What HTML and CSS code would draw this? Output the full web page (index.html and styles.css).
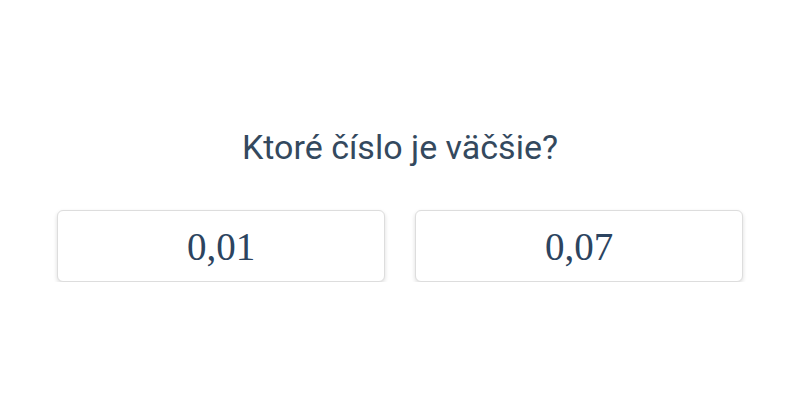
FILE: index.html
```html
<!DOCTYPE html>
<html lang="sk">
<head>
  <meta charset="UTF-8" />
  <meta name="viewport" content="width=device-width, initial-scale=1.0"/>
  <title>Porovnanie čísel</title>
  <link rel="stylesheet" href="styles.css">
</head>
<body>

<div class="quiz">
  <h2 class="question">Ktoré číslo je väčšie?</h2>

  <div class="options">
    <div class="option">0,01</div>
    <div class="option">0,07</div>
  </div>
</div>

</body>
</html>
```

FILE: styles.css
```css
body {
  font-family: Roboto, "Noto Sans", sans-serif;
  margin: 0;
  background-color: #ffffff;
  color: #34495e;
}

.quiz {
  padding: 126px 57px 0;
}

.question {
  margin: 0 0 42px;
  font-size: 34px;
  font-weight: 400;
  line-height: 42px;
  text-align: center;
  color: #34495e;
}

.options {
  display: grid;
  grid-template-columns: 1fr 1fr;
  gap: 30px;
}

.option {
  height: 70px;
  display: flex;
  align-items: center;
  justify-content: center;
  background-color: #ffffff;
  border: 1px solid #dddddd;
  border-radius: 6px;
  box-shadow: 0 2px 4px rgba(0,0,0,0.14);
  font-family: "Liberation Serif", "DejaVu Serif", serif;
  font-size: 39px;
  color: #2c4460;
  cursor: pointer;
}
```
